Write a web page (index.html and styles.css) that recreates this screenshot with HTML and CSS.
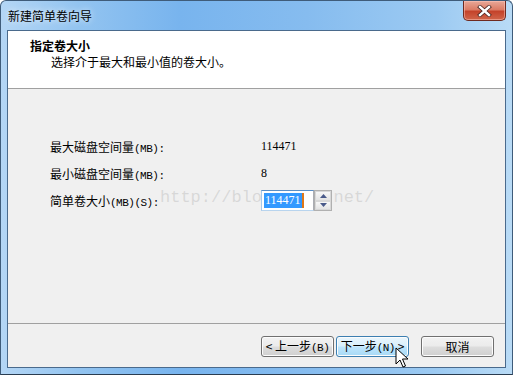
FILE: index.html
```
<!DOCTYPE html>
<html lang="zh-CN">
<head>
<meta charset="utf-8">
<title>新建简单卷向导</title>
<link rel="stylesheet" href="styles.css">
</head>
<body>
<div class="window">
  <div class="titlebar">
    <span class="title">新建简单卷向导</span>
    <div class="close">
      <svg width="17" height="12" viewBox="0 0 17 12">
        <path d="M4 2 L13 10 M13 2 L4 10" stroke="#4a2420" stroke-width="4" stroke-linecap="square" fill="none"/>
        <path d="M4 2 L13 10 M13 2 L4 10" stroke="#ffffff" stroke-width="2.4" stroke-linecap="square" fill="none"/>
      </svg>
    </div>
  </div>
  <div class="client">
    <div class="header">
      <div class="h-title">指定卷大小</div>
      <div class="h-sub">选择介于最大和最小值的卷大小。</div>
    </div>
    <div class="main">
      <div class="watermark">http://blog.csdn.net/</div>
      <div class="grid">
        <div class="label">最大磁盘空间量<span class="lat">(MB):</span></div>
        <div class="value">114471</div>
        <div class="label">最小磁盘空间量<span class="lat">(MB):</span></div>
        <div class="value">8</div>
        <div class="label">简单卷大小<span class="lat">(MB)(S):</span></div>
        <div class="value">
          <div class="spin">
            <div class="input"><span class="sel">114471</span><span class="caret"></span></div>
            <div class="arrows">
              <div class="arr"><svg width="7" height="4" viewBox="0 0 7 4"><path d="M0 4 L3.5 0 L7 4 Z" fill="#4a5a8a"/></svg></div>
              <div class="arr"><svg width="7" height="4" viewBox="0 0 7 4"><path d="M0 0 L3.5 4 L7 0 Z" fill="#4a5a8a"/></svg></div>
            </div>
          </div>
        </div>
      </div>
    </div>
    <div class="footer">
      <button class="btn">&lt; 上一步<span class="lat">(B)</span></button>
      <button class="btn hot">下一步<span class="lat">(N)</span> &gt;</button>
      <button class="btn cancel">取消</button>
      <svg class="cursor" width="14" height="22" viewBox="0 0 14 22">
        <path d="M1 1 L1 17 L5 13 L8 20 L10.5 19 L7.5 12 L13 12 Z" fill="#fff" stroke="#000" stroke-width="1"/>
      </svg>
    </div>
  </div>
</div>
</body>
</html>
```
FILE: styles.css
```
* { box-sizing: border-box; }
html, body { margin: 0; padding: 0; background: #ffffff; }
body {
  width: 513px; height: 375px; overflow: hidden;
  font-family: "Noto Sans CJK SC", "DejaVu Sans", sans-serif;
  font-size: 12px; color: #000;
}
.window {
  width: 513px; height: 375px;
  display: flex; flex-direction: column;
  border-radius: 6px 6px 0 0;
  border: 1px solid #3f5c7a;
  border-bottom-color: #2a3c50;
  background: linear-gradient(to right, #b4d6f5 0%, #93c4f0 15%, #78b4ee 35%, #86bcef 60%, #9ccaf2 85%, #b9dbf6 100%);
}
.titlebar {
  height: 29px; flex: none;
  display: flex; align-items: flex-start;
  padding-left: 7px;
}
.title {
  margin-top: 7px;
  font-size: 12px; line-height: 16px;
  color: #000;
  text-shadow: 0 0 6px rgba(255,255,255,0.9);
}
.close {
  margin-left: auto; margin-right: 6px;
  width: 43px; height: 20px;
  border: 1px solid #6e2a20; border-top: none;
  border-radius: 0 0 5px 5px;
  background: linear-gradient(to bottom, #e9a898 0%, #dc7c66 45%, #c4432b 55%, #d0654a 100%);
  box-shadow: inset 0 0 0 1px rgba(255,200,190,0.5);
  display: flex; align-items: center; justify-content: center;
}
.client {
  flex: 1;
  margin: 0 6px 6px 6px;
  border: 1px solid #4a6a8c;
  background: #f0f0f0;
  display: flex; flex-direction: column;
}
.header {
  height: 58px; flex: none;
  background: #ffffff;
  border-bottom: 1px solid #a0a0a0;
  padding: 7px 0 0 22px;
}
.h-title { font-weight: bold; line-height: 16px; }
.h-sub { padding-left: 21px; line-height: 16px; }
.main {
  flex: 1; position: relative;
  padding: 44px 0 0 42px;
}
.grid {
  position: relative;
  display: grid;
  grid-template-columns: 211px auto;
  grid-auto-rows: 27px;
  align-items: center;
}
.lat { font-family: "Liberation Mono", "DejaVu Sans Mono", monospace; font-size: 11px; letter-spacing: -0.5px; }
.value { font-family: "Liberation Serif", serif; font-size: 12px; }
.spin { display: flex; height: 21px; }
.input {
  width: 53px; height: 21px;
  background: #fff;
  border: 1px solid #abadb3;
  border-top-color: #5b8fc6;
  border-left-color: #a8c8e8;
  border-bottom-color: #b8d4ee;
  display: flex; align-items: center; padding-left: 2px;
}
.sel { background: #3399ff; color: #fff; font-family: "Liberation Serif", serif; line-height: 15px; padding: 0 1px; }
.caret { width: 2px; height: 15px; background: #e07818; }
.arrows { width: 18px; display: flex; flex-direction: column; border: 1px solid #b0b0b0; background: #f4f4f4; }
.arr { flex: 1; display: flex; align-items: center; justify-content: center; border: 1px solid #d8d8d8; background: linear-gradient(#f8f8f8, #e4e4e4); }
.watermark {
  position: absolute; left: 152px; top: 99px;
  font-family: "Liberation Mono", monospace; font-size: 17px; line-height: 20px;
  color: rgba(140,140,140,0.25);
  pointer-events: none;
}
.footer {
  height: 44px; flex: none; position: relative;
  border-top: 1px solid #a0a0a0;
  display: flex; justify-content: flex-end; align-items: flex-start;
  padding: 12px 11px 0 0; gap: 2px;
}
.btn {
  width: 73px; height: 21px;
  font-family: "Noto Sans CJK SC", sans-serif; font-size: 12px; color: #000;
  border: 1px solid #707070; border-radius: 3px;
  background: linear-gradient(to bottom, #f2f2f2 0%, #ebebeb 48%, #dddddd 52%, #cfcfcf 100%);
  box-shadow: inset 0 0 0 1px #fcfcfc;
  padding: 0; line-height: 17px;
}
.btn.hot {
  border-color: #3c7fb1;
  background: linear-gradient(to bottom, #eaf6fd 0%, #d9f0fc 48%, #bee6fd 52%, #a7d9f5 100%);
}
.btn.cancel { margin-left: 10px; }
.cursor { position: absolute; left: 387px; top: 23px; }
```
